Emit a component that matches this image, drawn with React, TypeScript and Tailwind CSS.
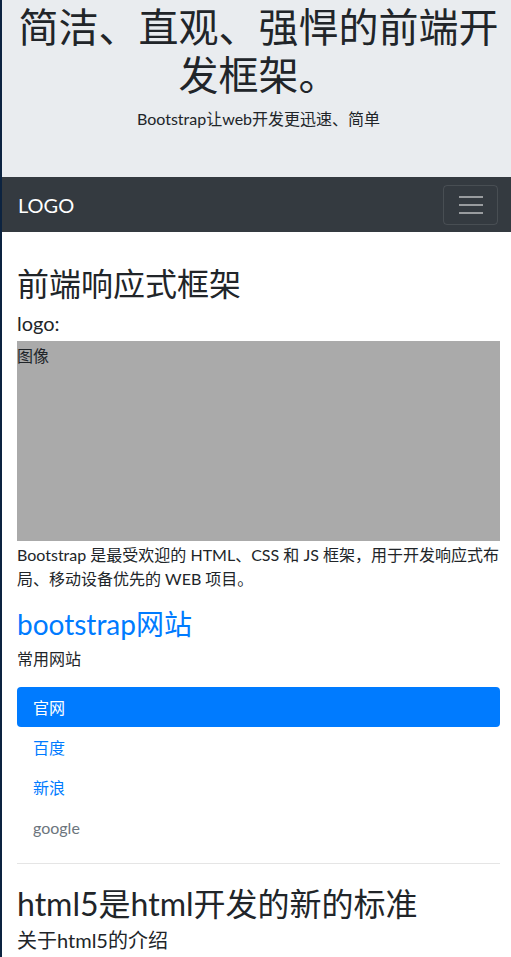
import React from "react";

const links = [
  { label: "官网", active: true },
  { label: "百度" },
  { label: "新浪" },
  { label: "google", disabled: true },
];

export default function App() {
  return (
    <div className="min-h-screen border-l-2 border-[#0c2340] bg-white text-[#212529] font-['Lato','Noto_Sans_CJK_SC',sans-serif]">
      {/* 顶部大标题 */}
      <div className="bg-[#e9ecef] pt-[3px] pb-[30px] pl-[15px] pr-[11px] text-center">
        <h1 className="text-[40px] leading-[48px] font-normal mb-2">简洁、直观、强悍的前端开发框架。</h1>
        <p className="text-base leading-6 mb-4">Bootstrap让web开发更迅速、简单</p>
      </div>

      {/* 导航栏 */}
      <nav className="h-[55px] bg-[#343a40] flex items-center justify-between pl-4 pr-[13px]">
        <span className="text-white text-xl leading-[30px]">LOGO</span>
        <button className="w-[55px] h-10 border border-white/10 rounded flex flex-col items-center justify-center gap-[6px]">
          <span className="block w-6 h-[2px] bg-[#999c9f]" />
          <span className="block w-6 h-[2px] bg-[#999c9f]" />
          <span className="block w-6 h-[2px] bg-[#999c9f]" />
        </button>
      </nav>

      {/* 内容 */}
      <div className="pt-[33px] pl-[15px] pr-[11px]">
        <h2 className="text-[32px] leading-[38px] font-normal mb-2">前端响应式框架</h2>
        <h5 className="text-xl leading-6 mb-[6px]">logo:</h5>
        <div className="h-[200px] bg-[#aaaaaa] pt-[3px] text-base leading-6">图像</div>
        <p className="text-base leading-6 mt-[2px] mb-3">
          Bootstrap 是最受欢迎的 HTML、CSS 和 JS 框架，用于开发响应式布局、移动设备优先的 WEB 项目。
        </p>
        <h3 className="text-[28px] leading-[34px] text-[#007bff] pt-1 mb-1">bootstrap网站</h3>
        <p className="text-base leading-6 pt-[2px] mb-4">常用网站</p>
        <ul className="flex flex-col">
          {links.map((l) => (
            <li
              key={l.label}
              className={
                "h-10 px-4 pt-[2px] flex items-center rounded text-base " +
                (l.active ? "bg-[#007bff] text-white" : l.disabled ? "text-[#6c757d]" : "text-[#007bff]")
              }
            >
              {l.label}
            </li>
          ))}
        </ul>
        <hr className="my-4 border-t border-black/10" />
        <h2 className="text-[32px] leading-[38px] font-normal pt-[5px] mb-[3px]">html5是html开发的新的标准</h2>
        <h5 className="text-xl leading-6 pt-[2px]">关于html5的介绍</h5>
      </div>
    </div>
  );
}
